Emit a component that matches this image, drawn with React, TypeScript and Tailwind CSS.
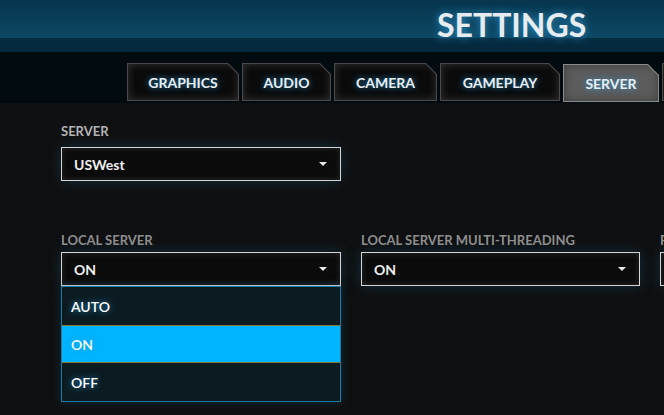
const glow = '[text-shadow:0_0_6px_rgba(40,160,230,0.85)]';

const tabs = [
  { name: 'GRAPHICS', w: 'w-[112px]' },
  { name: 'AUDIO', w: 'w-[89px]' },
  { name: 'CAMERA', w: 'w-[103px]' },
  { name: 'GAMEPLAY', w: 'w-[120px]' },
  { name: 'SERVER', w: 'w-[96px]', active: true },
  { name: 'ADVANCED', w: 'w-[110px]' },
];

function Tab({ name, w, active }: { name: string; w: string; active?: boolean }) {
  return (
    <div
      className={`${w} h-[38px] shrink-0 p-px [clip-path:polygon(0_0,calc(100%_-_11px)_0,100%_11px,100%_100%,0_100%)] ${
        active ? 'translate-y-px bg-[#8a8a8a]' : 'bg-[#4a4a4a]'
      }`}
    >
      <div
        className={`flex h-full items-center justify-center text-[14px] font-bold text-[#e8eef2] ${glow} [clip-path:polygon(0_0,calc(100%_-_10.5px)_0,100%_10.5px,100%_100%,0_100%)] ${
          active
            ? 'bg-[#5c5c5c] shadow-[inset_0_0_8px_rgba(40,40,40,0.6)]'
            : 'bg-[#0b0b0b] shadow-[inset_0_0_9px_rgba(130,130,130,0.35)]'
        }`}
      >
        {name}
      </div>
    </div>
  );
}

function Select({ value }: { value: string }) {
  return (
    <div className="flex h-[34px] items-center border border-[#d4d4d4] bg-[#0b0b0b] pl-[12px] shadow-[0_0_14px_rgba(25,85,115,0.45),inset_0_0_6px_rgba(255,255,255,0.12)]">
      <span className="text-[14px] font-bold text-[#f0f0f0]">{value}</span>
      <span className="ml-auto mr-[13px] h-0 w-0 border-x-[4px] border-t-[4px] border-x-transparent border-t-[#e8e8e8]" />
    </div>
  );
}

export default function App() {
  return (
    <div className="h-[415px] w-[664px] overflow-hidden bg-[#0f1011] font-['Lato',sans-serif]">
      {/* Header */}
      <div className="h-[52px] bg-[linear-gradient(to_bottom,#07354d_0px,#0b4764_38px,#062c42_38px,#05283c_52px)] pl-[437px] pt-[9px]">
        <h1 className="text-[32px] leading-8 font-bold text-[#e6ecf0] [text-shadow:0_0_8px_rgba(60,170,230,0.8)]">
          SETTINGS
        </h1>
      </div>

      {/* Tabs */}
      <div className="flex h-[51px] gap-[3px] bg-[#020b10] pl-[127px] pt-[11px]">
        {tabs.map((t) => (
          <Tab key={t.name} {...t} />
        ))}
      </div>

      {/* Body */}
      <div className="pl-[61px] pt-[20px]">
        <div className="text-[13px] leading-4 font-bold text-[#b3b3b3]">SERVER</div>
        <div className="mt-[8px] w-[280px]">
          <Select value="USWest" />
        </div>

        <div className="mt-[51px] flex gap-[20px]">
          <div className="w-[280px] shrink-0">
            <div className="mb-[4px] text-[13px] leading-4 font-bold text-[#8e8e8e]">LOCAL SERVER</div>
            <Select value="ON" />
            <div className="border border-[#1c7ca5] bg-[#0c1b21] shadow-[0_0_10px_rgba(20,90,130,0.35)]">
              {['AUTO', 'ON', 'OFF'].map((o) => (
                <div
                  key={o}
                  className={`flex h-[38px] items-center pl-[9px] text-[14px] font-semibold text-white ${glow} ${
                    o === 'ON' ? 'border-y border-[#8a7b2c] bg-[#00b4ff]' : ''
                  }`}
                >
                  {o}
                </div>
              ))}
            </div>
          </div>
          <div className="w-[279px] shrink-0">
            <div className="mb-[4px] text-[13px] leading-4 font-bold text-[#8e8e8e]">LOCAL SERVER MULTI-THREADING</div>
            <Select value="ON" />
          </div>
          <div className="w-[280px] shrink-0">
            <div className="mb-[4px] text-[13px] leading-4 font-bold text-[#8e8e8e]">PORT</div>
            <Select value="7777" />
          </div>
        </div>
      </div>
    </div>
  );
}
